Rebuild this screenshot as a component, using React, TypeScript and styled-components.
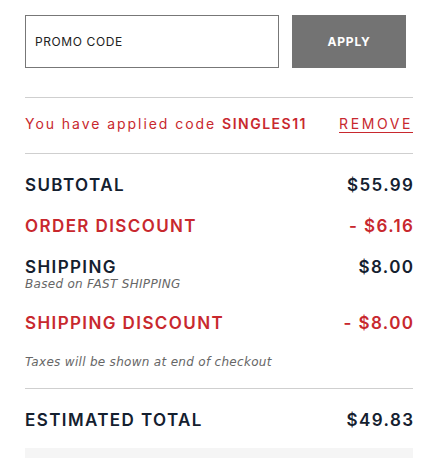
import React from "react";
import styled, { createGlobalStyle } from "styled-components";

const Global = createGlobalStyle`
  html, body { margin: 0; padding: 0; background: #fff; }
  body { font-family: Inter, "Open Sans", "Liberation Sans", sans-serif; }
`;

const NAVY = "#14202f";
const RED = "#c8282e";

const Panel = styled.div`
  width: 388px;
  padding: 15px 0 0 25px;
  display: flex;
  flex-direction: column;
`;

const PromoRow = styled.div`
  display: flex;
  gap: 13px;
  height: 53px;
`;

const PromoInput = styled.input`
  box-sizing: border-box;
  width: 254px;
  height: 53px;
  border: 1px solid #777;
  padding: 0 0 0 9px;
  font-family: Inter, sans-serif;
  font-size: 12px;
  letter-spacing: 0.6px;
  color: #222;
  outline: none;
  &::placeholder { color: #222; }
`;

const ApplyButton = styled.button`
  width: 114px;
  height: 53px;
  border: none;
  background: #737373;
  color: #fff;
  font-family: Inter, sans-serif;
  font-weight: 700;
  font-size: 12px;
  letter-spacing: 0.8px;
`;

const Divider = styled.hr<{ $top: number; $bottom: number }>`
  border: none;
  border-top: 1px solid #cfcfcf;
  margin: ${(p) => p.$top}px 0 ${(p) => p.$bottom}px;
  width: 388px;
`;

const AppliedRow = styled.div`
  display: flex;
  justify-content: space-between;
  align-items: center;
  color: ${RED};
  font-size: 14px;
  letter-spacing: 1.95px;
  height: 20px;
`;

const Code = styled.span`
  font-weight: 600;
  letter-spacing: 1.5px;
`;

const RemoveLink = styled.a`
  color: ${RED};
  text-decoration: underline;
  text-underline-offset: 3px;
  letter-spacing: 2.6px;
`;

const Line = styled.div<{ $red?: boolean; $mb: number }>`
  display: flex;
  justify-content: space-between;
  align-items: flex-start;
  color: ${(p) => (p.$red ? RED : NAVY)};
  font-weight: 600;
  font-size: 17px;
  letter-spacing: 1.4px;
  line-height: 22px;
  margin-bottom: ${(p) => p.$mb}px;
  margin-right: -1.4px;
`;

const Label = styled.div`
  display: flex;
  flex-direction: column;
`;

const Note = styled.div`
  font-family: "DejaVu Sans", sans-serif;
  font-style: italic;
  font-weight: 400;
  font-size: 12px;
  letter-spacing: 0.3px;
  color: #666;
  line-height: 13px;
`;

const GrayBox = styled.div`
  height: 20px;
  background: #f5f5f5;
  margin-top: 17px;
`;

export default function App() {
  return (
    <>
      <Global />
      <Panel>
        <PromoRow>
          <PromoInput placeholder="PROMO CODE" />
          <ApplyButton>APPLY</ApplyButton>
        </PromoRow>
        <Divider $top={29} $bottom={15} />
        <AppliedRow>
          <span>
            You have applied code <Code>SINGLES11</Code>
          </span>
          <RemoveLink>REMOVE</RemoveLink>
        </AppliedRow>
        <Divider $top={20} $bottom={20} />
        <Line $mb={19}>
          <span>SUBTOTAL</span>
          <span>$55.99</span>
        </Line>
        <Line $red $mb={19}>
          <span>ORDER DISCOUNT</span>
          <span>- $6.16</span>
        </Line>
        <Line $mb={21}>
          <Label>
            <span>SHIPPING</span>
            <Note>Based on FAST SHIPPING</Note>
          </Label>
          <span>$8.00</span>
        </Line>
        <Line $red $mb={22}>
          <span>SHIPPING DISCOUNT</span>
          <span>- $8.00</span>
        </Line>
        <Note>Taxes will be shown at end of checkout</Note>
        <Divider $top={19} $bottom={20} />
        <Line $mb={0}>
          <span>ESTIMATED TOTAL</span>
          <span>$49.83</span>
        </Line>
        <GrayBox />
      </Panel>
    </>
  );
}
